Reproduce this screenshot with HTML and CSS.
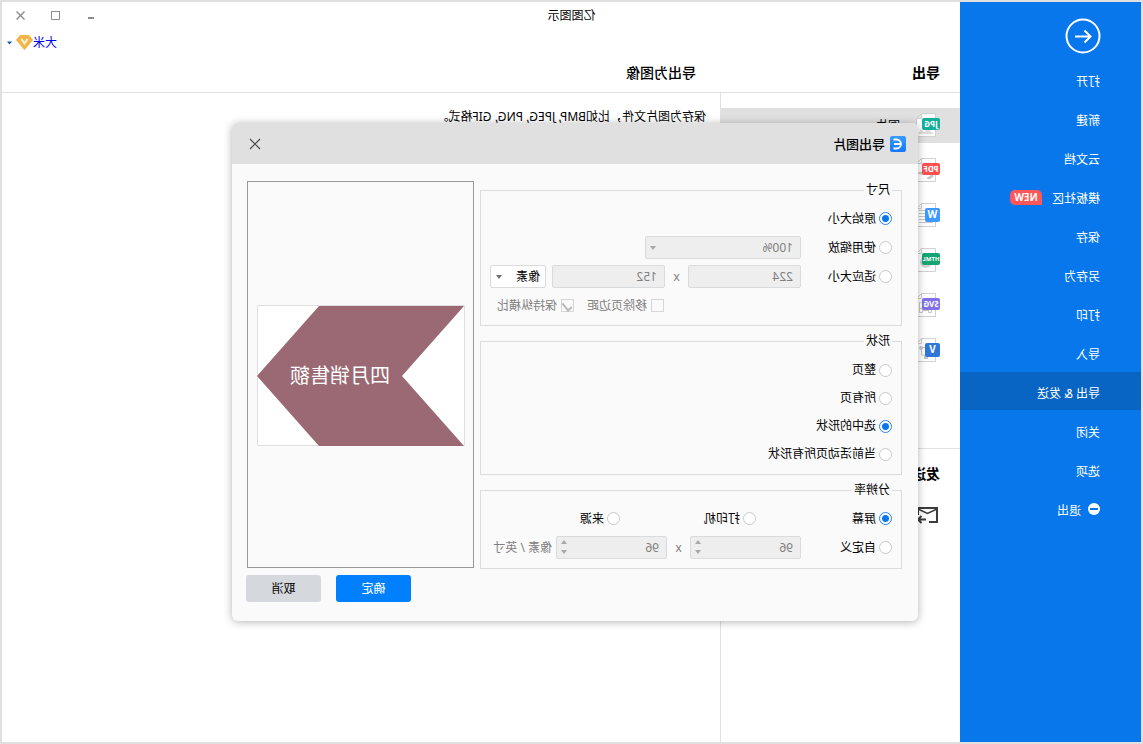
FILE: index.html
```html
<!DOCTYPE html>
<html lang="zh-CN">
<head>
<meta charset="utf-8">
<title>亿图图示</title>
<link rel="stylesheet" href="styles.css">
</head>
<body>
<div class="window">
  <header class="titlebar">
    <span></span>
    <span class="app-title">亿图图示</span>
    <div class="window-controls">
      <button type="button" aria-label="最小化"><svg width="11" height="11" viewBox="0 0 11 11"><path d="M2 8h6" stroke="#8c8c8c" stroke-width="2"/></svg></button>
      <button type="button" aria-label="最大化"><svg width="11" height="11" viewBox="0 0 11 11"><path d="M1.500 1.500h8v8h-8z" fill="none" stroke="#8c8c8c"/><path d="M1 1.500h9" stroke="#8c8c8c" stroke-width="1"/></svg></button>
      <button type="button" aria-label="关闭"><svg width="11" height="11" viewBox="0 0 11 11"><path d="M1.500 1.500l8 8M9.500 1.500l-8 8" stroke="#8c8c8c" stroke-width="1.400"/></svg></button>
    </div>
  </header>

  <nav class="sidebar">
    <button type="button" class="back" aria-label="返回"><svg width="36" height="36" viewBox="0 0 36 36" fill="none" stroke="#fff" stroke-width="2"><circle cx="18" cy="18" r="16.500"/><path d="M26 18.500H11M16.500 12.500l-6 6 6 6"/></svg></button>
    <a href="#">打开</a>
    <a href="#">新建</a>
    <a href="#">云文档</a>
    <a href="#">模板社区<span class="new">NEW</span></a>
    <a href="#">保存</a>
    <a href="#">另存为</a>
    <a href="#">打印</a>
    <a href="#">导入</a>
    <a href="#" class="active">导出 &amp; 发送</a>
    <a href="#">关闭</a>
    <a href="#">选项</a>
    <a href="#"><svg class="exit-icon" width="12" height="12" viewBox="0 0 12 12"><circle cx="6" cy="6" r="6" fill="#fff"/><path d="M2 6h8" stroke="#0876ea" stroke-width="2"/></svg>退出</a>
  </nav>

  <div class="account">
    <a href="#">大米</a>
    <svg width="17" height="15" viewBox="0 0 17 15"><path d="M4 .5h9l3.500 4.500-8 9.500L.5 5z" fill="#f3b548" stroke="#f3b548" stroke-linejoin="round"/><path d="M5.500 4l3 4.500 3-4.500" fill="none" stroke="#fff3da" stroke-width="2"/></svg>
    <svg width="6" height="4" viewBox="0 0 6 4"><path d="M0 0.500h5L2.500 3.500z" fill="#0b5cab"/></svg>
  </div>

  <div class="headings">
    <h1>导出</h1>
    <h2>导出为图像</h2>
  </div>

  <section class="formats">
    <ul>
      <li class="selected"><svg class="doc" width="26" height="26" viewBox="0 0 26 26"><path d="M4.500 1.500h14l5 5v18h-19zM18.500 1.500v5h5" fill="#fff" stroke="#d0d0d0"/><path d="M6 22l6-5 4 3 3-3 3 5z" fill="#dedede"/><rect y="6" width="18" height="12" rx="2" fill="#15ae9c"/><text class="tag" x="9" y="15">JPG</text></svg>图片</li>
      <li><svg class="doc" width="26" height="26" viewBox="0 0 26 26"><path d="M4.500 1.500h14l5 5v18h-19zM18.500 1.500v5h5" fill="#fff" stroke="#d0d0d0"/><path d="M7 18q4 4 5 2M17 16q4 0 4 1" fill="none" stroke="#c8c8c8" stroke-width="3"/><rect y="6" width="18" height="12" rx="2" fill="#ff5050"/><text class="tag" x="9" y="15">PDF</text></svg></li>
      <li><svg class="doc" width="26" height="26" viewBox="0 0 26 26"><path d="M4.500 1.500h14l5 5v18h-19zM18.500 1.500v5h5" fill="#fff" stroke="#d0d0d0"/><path d="M15 8.500h6M15 11.500h6M15 14.500h6M15 17.500h6M7 20.500h14" stroke="#c8c8c8"/><rect y="6" width="15" height="14" rx="2" fill="#3d98ff"/><text class="tag letter" x="7.500" y="16">W</text></svg></li>
      <li><svg class="doc" width="26" height="26" viewBox="0 0 26 26"><path d="M4.500 1.500h14l5 5v18h-19zM18.500 1.500v5h5" fill="#fff" stroke="#d0d0d0"/><circle cx="14" cy="15" r="6" fill="#d4d4d4"/><rect y="6" width="18" height="12" rx="2" fill="#14a572"/><text class="tag narrow" x="9" y="14">HTML</text></svg></li>
      <li><svg class="doc" width="26" height="26" viewBox="0 0 26 26"><path d="M4.500 1.500h14l5 5v18h-19zM18.500 1.500v5h5" fill="#fff" stroke="#d0d0d0"/><path d="M8.500 16.500h3v4h-3zM17.500 16.500h3v4h-3zM11.500 18.500h6M18.500 10.500h2v6" fill="none" stroke="#c8c8c8"/><rect y="6" width="18" height="12" rx="2" fill="#8170e6"/><text class="tag" x="9" y="15">SVG</text></svg></li>
      <li><svg class="doc" width="26" height="26" viewBox="0 0 26 26"><path d="M4.500 1.500h14l5 5v18h-19zM18.500 1.500v5h5" fill="#fff" stroke="#d0d0d0"/><path d="M15 10.500h5M18.500 10v8h-3" fill="none" stroke="#c8c8c8"/><circle cx="19" cy="11" r="2" fill="#c8c8c8"/><path d="M12 18h4v4h-4z" fill="#c8c8c8"/><rect y="6" width="15" height="14" rx="2" fill="#2f77db"/><text class="tag letter" x="7.500" y="16">V</text></svg></li>
    </ul>
    <h3>发送</h3>
    <svg class="mail" width="24" height="18" viewBox="0 0 24 18" fill="none" stroke="#3c3c3c" stroke-width="2"><path d="M10 16H2V2h19v7"/><path d="M2 3l9.500 4.500L21 3" stroke-width="1.500"/><path d="M13 13.500h8M17.500 10l3.500 3.500-3.500 3.500"/></svg>
  </section>

  <main class="content"><p>保存为图片文件，比如BMP, JPEG, PNG, GIF格式。</p></main>

  <form class="dialog" role="dialog" aria-labelledby="dialog-title">
    <div class="dialog-title">
      <svg width="16" height="16" viewBox="0 0 16 16"><defs><linearGradient id="logo" x2="0" y2="1"><stop stop-color="#389dff"/><stop offset="1" stop-color="#1877ff"/></linearGradient></defs><rect width="16" height="16" rx="2" fill="url(#logo)"/><path d="M12.500 3.500H9.500a4.500 4.500 0 0 0 0 9h3M6 8h6" fill="none" stroke="#fff" stroke-width="1.800"/></svg>
      <span id="dialog-title">导出图片</span>
      <button type="button" class="close" aria-label="关闭"><svg width="12" height="12" viewBox="0 0 12 12"><path d="M1 1l10 10M11 1L1 11" stroke="#4a4a4a" stroke-width="1.200"/></svg></button>
    </div>
    <div class="dialog-body">
      <div class="options">
        <fieldset class="size">
          <legend>尺寸</legend>
          <div class="row"><label><input type="radio" name="size" checked>原始大小</label></div>
          <div class="row">
            <label class="lead"><input type="radio" name="size">使用缩放</label>
            <span class="picker scale"><select aria-label="缩放" disabled><option>100%</option></select></span>
          </div>
          <div class="row">
            <label class="lead"><input type="radio" name="size">适应大小</label>
            <input class="field" type="text" value="224" aria-label="宽度" disabled>
            <span class="times">x</span>
            <input class="field" type="text" value="152" aria-label="高度" disabled>
            <span class="picker unit"><select aria-label="单位"><option>像素</option></select></span>
          </div>
          <div class="row checks">
            <label><input type="checkbox" disabled>移除页边距</label>
            <label><input type="checkbox" checked disabled>保持纵横比</label>
          </div>
        </fieldset>
        <fieldset class="shape">
          <legend>形状</legend>
          <div class="row"><label><input type="radio" name="shape">整页</label></div>
          <div class="row"><label><input type="radio" name="shape">所有页</label></div>
          <div class="row"><label><input type="radio" name="shape" checked>选中的形状</label></div>
          <div class="row"><label><input type="radio" name="shape">当前活动页所有形状</label></div>
        </fieldset>
        <fieldset class="dpi">
          <legend>分辨率</legend>
          <div class="row sources">
            <label><input type="radio" name="dpi" checked>屏幕</label>
            <label><input type="radio" name="dpi">打印机</label>
            <label><input type="radio" name="dpi">来源</label>
          </div>
          <div class="row">
            <label class="lead"><input type="radio" name="dpi">自定义</label>
            <span class="spin"><input class="field" type="text" value="96" aria-label="水平分辨率" disabled></span>
            <span class="times">x</span>
            <span class="spin"><input class="field" type="text" value="96" aria-label="垂直分辨率" disabled></span>
            <span class="per">像素 / 英寸</span>
          </div>
        </fieldset>
      </div>
      <div class="preview">
        <svg width="208" height="141" viewBox="0 0 208 141"><path d="M.5.5h207v140H.5z" fill="#fff" stroke="#e0e0e0"/><path d="M1 1h145l62 70-62 70H1l62-70z" fill="#9a6973"/><text x="125" y="78">四月销售额</text></svg>
      </div>
    </div>
    <div class="actions">
      <button type="button" class="primary">确定</button>
      <button type="button">取消</button>
    </div>
  </form>
</div>
</body>
</html>
```
FILE: styles.css
```css
* { box-sizing: border-box; }

body {
  margin: 0;
  overflow: hidden;
  background: #fff;
  color: #000;
  font: 12px/16px "Noto Sans", "Noto Sans CJK SC", sans-serif;
}

button, input, select { font: inherit; color: inherit; }
button { padding: 0; border: 0; background: none; }
svg { display: block; flex: none; }
h1, h2, h3, p, ul { margin: 0; padding: 0; }

/* The whole interface is shown as a left-right reflection. */
.window {
  position: relative;
  display: grid;
  grid-template-columns: 181px 240px 1fr;
  grid-template-rows: 27px 26px 38px 1fr;
  min-height: 100vh;
  border: 2px solid #e0e0e0;
  transform: scaleX(-1);
}

.titlebar {
  grid-area: 1 / 1 / 2 / -1;
  display: grid;
  grid-template-columns: 1fr auto 1fr;
  align-items: center;
}
.window-controls { display: flex; justify-self: end; padding-right: 1px; }
.window-controls button { display: flex; justify-content: center; width: 35px; }

.sidebar {
  grid-area: 1 / 1 / -1 / 2;
  display: flex;
  flex-direction: column;
  background: #0877eb;
  color: #fff;
}
.back { margin: 16px 0 6px 40px; width: 36px; }
.sidebar a {
  display: flex;
  align-items: center;
  height: 38px;
  margin-bottom: 1px;
  padding: 6px 0 0 41px;
  color: #fff;
  text-decoration: none;
}
.sidebar .active { background: #0865c4; }
.exit-icon { margin: 0 7px 4px 0; }
.new {
  width: 32px;
  margin: 0 0 4px 10px;
  border-radius: 5px 5px 5px 0;
  background: #ff5658;
  font-size: 10px;
  line-height: 15px;
  font-weight: 700;
  text-align: center;
}

.account {
  grid-area: 2 / 3 / 3 / 4;
  display: flex;
  align-items: center;
  justify-content: flex-end;
  padding: 1px 4px 0 0;
}
.account a { color: #00e; text-decoration: none; }
.account svg + svg { margin-left: 4px; }

.headings {
  grid-area: 3 / 2 / 4 / 4;
  display: grid;
  grid-template-columns: 240px 1fr;
  align-items: center;
  padding-bottom: 2px;
  border-bottom: 1px solid #e0e0e0;
}
h1, h2, h3 { padding-left: 20px; font-size: 14px; line-height: 20px; font-weight: 700; }
h2 { padding-left: 24px; font-weight: 500; }

.formats { grid-area: 4 / 2 / 5 / 3; border-right: 1px solid #e0e0e0; padding-top: 15px; }
.formats ul { list-style: none; padding-bottom: 70px; border-bottom: 1px solid #e0e0e0; }
.formats li { display: flex; align-items: center; height: 35px; margin-bottom: 10px; padding-left: 20px; }
.formats .selected { background: #e0e0e0; }
.doc { margin: 0 14px 1px 0; }
.tag { fill: #fff; font-size: 8px; font-weight: 700; text-anchor: middle; }
.letter { font-size: 10px; }
.narrow { font-size: 6px; }
.formats h3 { margin-top: 15px; }
.mail { margin: 22px 0 0 21px; }

.content { grid-area: 4 / 3 / 5 / 4; padding: 16px 0 0 14px; }

.dialog {
  position: absolute;
  top: 121px;
  left: 223px;
  width: 686px;
  overflow: hidden;
  border-radius: 6px;
  background: #fafafa;
  box-shadow: 0 1px 8px rgba(0, 0, 0, .3);
}
.dialog-title {
  display: flex;
  align-items: center;
  gap: 5px;
  height: 41px;
  padding: 0 17px 0 12px;
  background: #e0e0e0;
  font-size: 13px;
  font-weight: 500;
}
.close { margin-left: auto; }

.dialog-body { display: grid; grid-template-columns: 1fr 227px; gap: 6px; padding: 17px 15px 6px 16px; }
.options { display: flex; flex-direction: column; gap: 7px; padding-top: 1px; }
fieldset { min-width: 0; margin: 0; padding: 6px 9px; border: 1px solid #dcdcdc; }
fieldset.size { padding-bottom: 5px; }
fieldset.shape { padding-top: 7px; }
legend { padding: 0 2px; line-height: 16px; }
.row { display: flex; align-items: center; height: 29px; }
.shape .row { height: 28px; }
label { display: flex; align-items: center; gap: 3px; white-space: nowrap; }
.lead { width: 91px; }
.sources { display: grid; grid-template-columns: 136px 136px 1fr; }

input[type="radio"], input[type="checkbox"] {
  appearance: none;
  flex: none;
  width: 13px;
  height: 13px;
  margin: 0;
  border: 1px solid #c9c9c9;
  background: #fff;
}
input[type="radio"] { border-radius: 50%; }
input[type="radio"]:checked {
  border-color: #2a87ee;
  background: radial-gradient(circle, #0877eb 3px, #fff 4px);
}
.checks { padding-left: 228px; gap: 13px; color: #808080; }
.checks label { gap: 4px; }
input[type="checkbox"] { display: grid; place-items: center; border-color: #d6d6d6; background: #fafafa; }
input[type="checkbox"]:checked::after {
  content: "";
  width: 4px;
  height: 8px;
  border: solid #b8b8b8;
  border-width: 0 2px 2px 0;
  transform: rotate(40deg);
}

.field, select {
  appearance: none;
  display: block;
  width: 113px;
  height: 23px;
  margin: 0;
  padding: 0 7px;
  border: 1px solid #dadbdd;
  border-radius: 2px;
  background: #fff;
}
.field:disabled, select:disabled { background: #eee; color: #808080; opacity: 1; }
.times { width: 23px; text-align: center; color: #808080; }
.picker, .spin { position: relative; display: block; }
.picker select { width: 100%; }
.scale { width: 156px; }
.unit { width: 56px; margin-left: 6px; }
.unit select { padding: 0 5px; }
.picker::after, .spin::before, .spin::after {
  content: "";
  position: absolute;
  right: 5px;
  top: 10px;
  border: solid transparent;
  border-width: 4px 3px 0;
  border-top-color: #a8a8a8;
}
.unit::after { right: 6px; border-top-color: #707070; }
.spin .field { width: 111px; }
.spin::before { top: 4px; border-width: 0 3px 4px; border-bottom-color: #a8a8a8; }
.spin::after { top: 14px; }
.per { margin-left: 4px; color: #808080; white-space: nowrap; }

.preview {
  display: flex;
  align-items: center;
  justify-content: center;
  height: 387px;
  padding: 2px 2px 0 0;
  border: 1px solid #999;
}
.preview text { fill: #fff; font-size: 20px; text-anchor: middle; }

.actions { display: flex; justify-content: flex-end; gap: 15px; padding: 0 14px 19px; }
.actions button { width: 75px; height: 27px; border-radius: 3px; background: #d5d8dd; }
.actions .primary { background: #0080ff; color: #fff; }
```
